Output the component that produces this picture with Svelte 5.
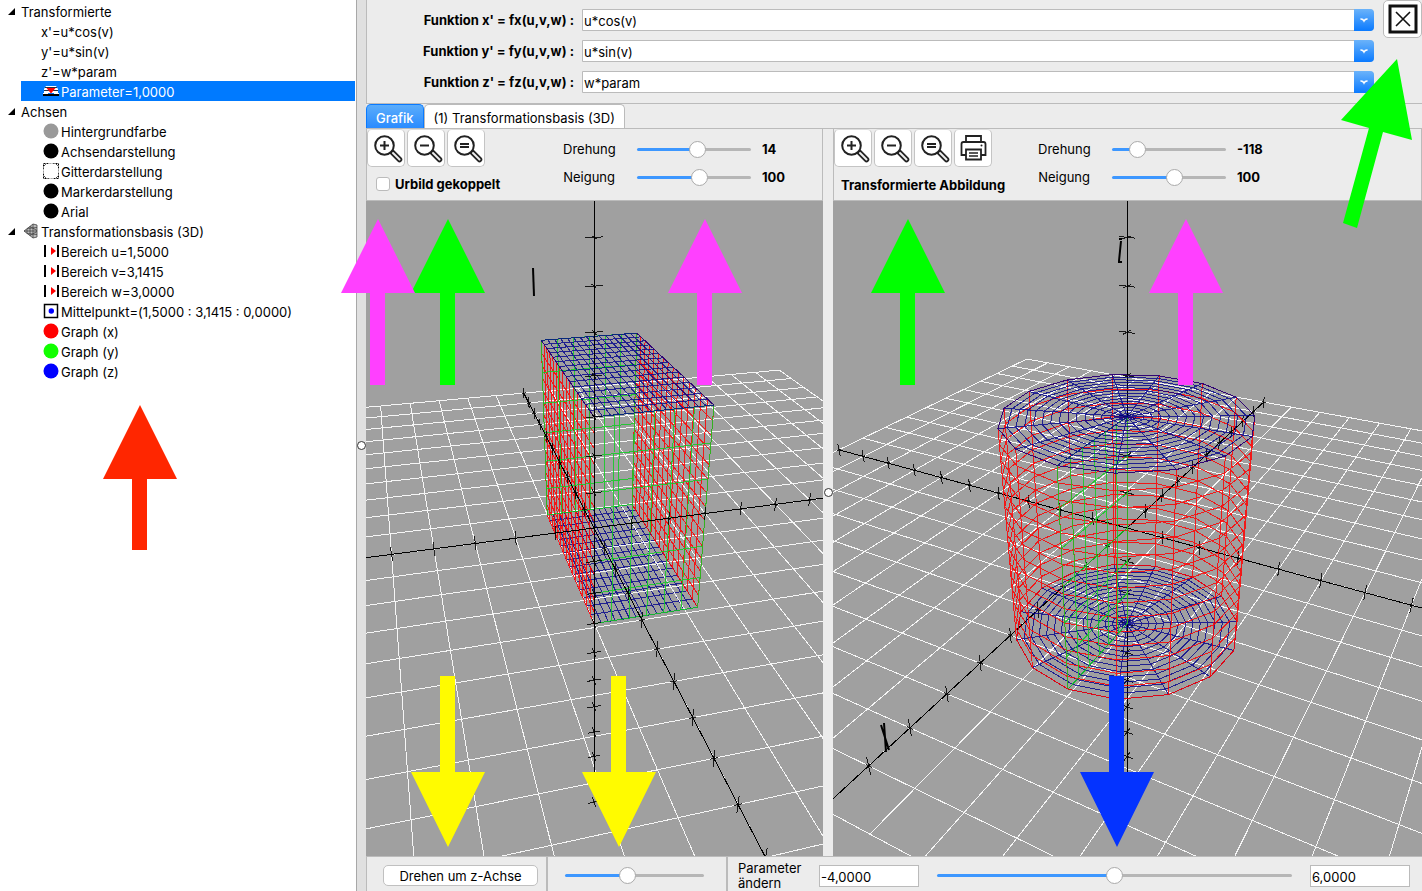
<script lang="ts">
  type Vec = [number, number, number];
  type Item = { text: string; icon?: string; color?: string; selected?: boolean };
  type Group = { text: string; icon?: string; items: Item[] };

  const tree: Group[] = [
    {
      text: 'Transformierte',
      items: [
        { text: "x'=u*cos(v)" },
        { text: "y'=u*sin(v)" },
        { text: "z'=w*param" },
        { text: 'Parameter=1,0000', icon: 'param', selected: true },
      ],
    },
    {
      text: 'Achsen',
      items: [
        { text: 'Hintergrundfarbe', icon: 'dot', color: '#999' },
        { text: 'Achsendarstellung', icon: 'dot', color: '#000' },
        { text: 'Gitterdarstellung', icon: 'grid' },
        { text: 'Markerdarstellung', icon: 'dot', color: '#000' },
        { text: 'Arial', icon: 'dot', color: '#000' },
      ],
    },
    {
      text: 'Transformationsbasis (3D)',
      icon: 'mesh',
      items: [
        { text: 'Bereich u=1,5000', icon: 'range' },
        { text: 'Bereich v=3,1415', icon: 'range' },
        { text: 'Bereich w=3,0000', icon: 'range' },
        { text: 'Mittelpunkt=(1,5000 : 3,1415 : 0,0000)', icon: 'center' },
        { text: 'Graph (x)', icon: 'dot', color: '#f00' },
        { text: 'Graph (y)', icon: 'dot', color: '#1f0' },
        { text: 'Graph (z)', icon: 'dot', color: '#00f' },
      ],
    },
  ];

  const functions = [
    { id: 'fx', label: "Funktion x' = fx(u,v,w) :", value: 'u*cos(v)' },
    { id: 'fy', label: "Funktion y' = fy(u,v,w) :", value: 'u*sin(v)' },
    { id: 'fz', label: "Funktion z' = fz(u,v,w) :", value: 'w*param' },
  ];

  let coupled = $state(false);
  let spin = $state(44);
  let param = $state(1);
  let left = $state({ turn: 14, tilt: 100 });
  let right = $state({ turn: -118, tilt: 100 });

  const STEPS = 15;
  const TAU = Math.PI * 2;

  // camera: 30 degrees above the plane, 20 units away
  function camera(deg: number, cx: number, cy: number) {
    const a = (deg * Math.PI) / 180;
    return ([x, y, z]: Vec) => {
      const X = x * Math.cos(a) - y * Math.sin(a);
      const Y = x * Math.sin(a) + y * Math.cos(a);
      const w = 1 + (Y * 0.866 - z * 0.5) / 20;
      const sx = cx + (39.56 * X) / w;
      const sy = cy - (39.56 * (z * 0.866 + Y * 0.5)) / w;
      return `${sx.toFixed(1)} ${sy.toFixed(1)}`;
    };
  }

  function build(deg: number, cx: number, map: (u: number, v: number, w: number) => Vec) {
    const p = camera(deg, cx, 327);
    const line = (...pts: Vec[]) => 'M' + pts.map(p).join('L');

    // n x m lines over a face, a and b running from 0 to 1
    function face(n: number, m: number, at: (a: number, b: number) => Vec) {
      let d = '';
      for (let i = 0; i <= n; i++) {
        d += line(...Array.from({ length: m + 1 }, (_, j) => at(i / n, j / m)));
      }
      for (let j = 0; j <= m; j++) {
        d += line(...Array.from({ length: n + 1 }, (_, i) => at(i / n, j / m)));
      }
      return d;
    }

    const cap = (w: number) => face(STEPS, STEPS, (a, b) => map(a * 3, b * TAU, w));

    const axes = line([-10, 0, 0], [10, 0, 0]) + line([0, -10, 0], [0, 10, 0]) + line([0, 0, -9], [0, 0, 10]);
    let ticks = '';
    const t = 0.2;
    for (let i = -10; i <= 10; i++) {
      if (i === 0) continue;
      ticks += line([i, 0, -t], [i, 0, t]) + line([i, -t / 3, 0], [i, t / 3, 0]);
      ticks += line([0, i, -t], [0, i, t]) + line([-t / 3, i, 0], [t / 3, i, 0]);
      ticks += line([-t, 0, i], [t, 0, i]) + line([0, -t, i], [0, t, i]);
    }

    return {
      floor: face(20, 20, (a, b) => [a * 20 - 10, b * 20 - 10, 0]),
      axes,
      ticks,
      green: [0, TAU].map(v => face(6, 6, (a, b) => map(a * 3, v, b * 6 - 3))).join(''),
      red: [0, 3].map(u => face(STEPS, STEPS, (a, b) => map(u, a * TAU, b * 6 - 3))).join(''),
      bottom: cap(-3),
      top: cap(3),
    };
  }

  const box = build(14.6, 228, (u, v, w) => [u, v, w]);
  const cylinder = build(-118.5, 294, (u, v, w) => [u * Math.cos(v), u * Math.sin(v), w]);

  const up = (x: number, y: number, len: number) =>
    `${x},${y} ${x + 37},${y + 74} ${x + 7},${y + 74} ${x + 7},${y + len} ${x - 8},${y + len} ${x - 8},${y + 74} ${x - 37},${y + 74}`;
  const down = (x: number, y: number, len: number) =>
    `${x},${y} ${x + 37},${y - 75} ${x + 7},${y - 75} ${x + 7},${y - len} ${x - 8},${y - len} ${x - 8},${y - 75} ${x - 37},${y - 75}`;

  const arrows = [
    { color: '#00ff00', points: up(448, 219, 166) },
    { color: '#ff40ff', points: up(378, 219, 166) },
    { color: '#ff40ff', points: up(705, 219, 166) },
    { color: '#00ff00', points: up(908, 219, 166) },
    { color: '#ff40ff', points: up(1186, 219, 166) },
    { color: '#ff2600', points: up(140, 405, 145) },
    { color: '#fffb00', points: down(448, 847, 171) },
    { color: '#fffb00', points: down(619, 847, 171) },
    { color: '#0433ff', points: down(1117, 847, 171) },
    { color: '#00ff00', points: '1397,59 1412,140 1383,132 1357,228 1343,223 1369,128 1341,120' },
  ];

  const pct = (v: number, min: number, max: number) => (v - min) / (max - min);
</script>

{#snippet treeIcon(name: string, color?: string)}
  <svg class="tree-icon" width="16" height="16" viewBox="0 0 16 16" aria-hidden="true">
    {#if name === 'dot'}
      <circle cx="8" cy="8" r="7.500" fill={color} />
    {:else if name === 'grid'}
      <rect width="16" height="16" fill="#fff" />
      <rect x=".5" y=".5" width="15" height="15" fill="none" stroke="#000" stroke-dasharray="2 1" />
      <path d="M1 3l2-2M13 1l2 2M1 13l2 2M13 15l2-2" stroke="#000" stroke-dasharray="1 1" />
      <circle cx="8" cy="8" r="7.700" fill="#fff" />
    {:else if name === 'param'}
      <path d="M3 3h10l2 3v4H1V6z" fill="#fff" />
      <path d="M2 4.500h12M1 7.500h14" stroke="#234" stroke-width="1" />
      <path d="M3.500 5h9L8 10.500z" fill="#f00" />
      <path d="M0 10.500h5M11 10.500h5" stroke="#fff" />
      <path d="M0 12h16" stroke="#000" stroke-width="2" />
    {:else if name === 'range'}
      <path d="M2 2v12M15 2v12" stroke="#000" stroke-width="2" />
      <path d="M8 4l5 4-5 4z" fill="#f00" />
    {:else if name === 'center'}
      <rect x="1.500" y="1.500" width="13" height="13" fill="#fff" stroke="#000" stroke-width="1.500" />
      <circle cx="8.300" cy="8" r="2.700" fill="#00f" />
    {:else}
      <path d="M1 8L10 1l4 1v12l-4 1zM10 1v14M7 3.500v9M4 6v4.500M1 8h13M4 5.500l10-1M4 10.500l10 1M7 3.500l7 4M7 12.500l7-4" fill="#bbb" stroke="#444" stroke-width=".8" />
    {/if}
  </svg>
{/snippet}

{#snippet toolButton(kind: string, label: string)}
  <button class="tool" aria-label={label} title={label}>
    <svg width="38" height="38" viewBox="0 0 38 38" fill="none" stroke="#222">
      {#if kind === 'print'}
        <path d="M12 13V7h15v6" stroke-width="1.800" />
        <path d="M12 26H7.500v-11q0-2 2-2h20q2 0 2 2v11H27" stroke-width="1.800" />
        <path d="M12 20.500h15v10H12z" stroke-width="1.800" />
        <path d="M15 24h9M15 27h9" stroke-width="1.500" />
        <circle cx="27.500" cy="16.500" r="1" fill="#222" stroke="none" />
      {:else}
        <path d="M25 23l7.500 7.500" stroke-width="5.500" stroke-linecap="round" />
        <path d="M26 24l6.500 6.500" stroke="#eee" stroke-width="2" stroke-linecap="round" />
        <circle cx="17.500" cy="16.500" r="9.300" fill="#fff" stroke-width="2" />
        {#if kind === 'in'}
          <path d="M13 16.500h9M17.500 12v9" stroke-width="2" />
        {:else if kind === 'out'}
          <path d="M13 16.500h9" stroke-width="2" />
        {:else}
          <path d="M13 15h9M13 18h9" stroke-width="2" />
        {/if}
      {/if}
    </svg>
  </button>
{/snippet}

{#snippet angles(view: { turn: number; tilt: number }, id: string)}
  <div class="angles">
    <label for="{id}-turn">Drehung</label>
    <input id="{id}-turn" type="range" min="-180" max="180" bind:value={view.turn} style="--p:{pct(view.turn, -180, 180)}" />
    <output for="{id}-turn">{view.turn}</output>
    <label for="{id}-tilt">Neigung</label>
    <input id="{id}-tilt" type="range" min="0" max="180" bind:value={view.tilt} style="--p:{pct(view.tilt, 0, 180)}" />
    <output for="{id}-tilt">{view.tilt}</output>
  </div>
{/snippet}

<div class="app">
  <nav class="sidebar">
    <ul class="tree">
      {#each tree as group}
        <li>
          <div class="row">
            <svg class="twisty" width="8" height="8" viewBox="0 0 8 8" aria-hidden="true"><path d="M7 0v7H0z" /></svg>
            {#if group.icon}{@render treeIcon(group.icon)}{/if}
            <span>{group.text}</span>
          </div>
          <ul>
            {#each group.items as item}
              <li class="row child" class:selected={item.selected}>
                {#if item.icon}{@render treeIcon(item.icon, item.color)}{/if}
                <span>{item.text}</span>
              </li>
            {/each}
          </ul>
        </li>
      {/each}
    </ul>
  </nav>

  <div class="splitter main-split"><i></i></div>

  <main class="main">
    <header class="functions">
      <div class="fields">
        {#each functions as f}
          <label for={f.id}>{f.label}</label>
          <div class="combo">
            <select id={f.id}><option>{f.value}</option></select>
            <svg width="20" height="22" viewBox="0 0 20 22" aria-hidden="true">
              <path d="M7 10q2 0 3 2 1-2 3-2" fill="none" stroke="#fff" stroke-width="1.600" stroke-linecap="round" />
            </svg>
          </div>
        {/each}
      </div>
      <button class="close" aria-label="Schließen">
        <svg width="30" height="30" viewBox="0 0 30 30" fill="none" stroke="#111">
          <rect x="2" y="2" width="26" height="26" stroke-width="3" />
          <path d="M8 8l14 14M22 8L8 22" stroke-width="1.600" />
        </svg>
      </button>
    </header>

    <div class="tabs">
      <button class="tab active">Grafik</button>
      <button class="tab">(1) Transformationsbasis (3D)</button>
    </div>

    <div class="panes">
      <section class="pane source">
        <div class="toolbar">
          <div class="tools">
            <div class="buttons">
              {@render toolButton('in', 'Vergrößern')}
              {@render toolButton('out', 'Verkleinern')}
              {@render toolButton('fit', 'Originalgröße')}
            </div>
            <label class="check"><input type="checkbox" bind:checked={coupled} />Urbild gekoppelt</label>
          </div>
          {@render angles(left, 'src')}
        </div>
        <svg class="stage" viewBox="0 0 457 655" preserveAspectRatio="xMidYMid slice">
          <path class="blue" d={box.bottom} />
          <path class="floor" d={box.floor} />
          <path class="red" d={box.red} />
          <path class="green" d={box.green} />
          <path class="blue" d={box.top} />
          <path class="axis" d={box.axes} />
          <path class="tick" d={box.ticks} />
          <path class="letter" d="M167 67l1 28" />
        </svg>
      </section>

      <div class="splitter pane-split"><i></i></div>

      <section class="pane target">
        <div class="toolbar">
          <div class="tools">
            <div class="buttons">
              {@render toolButton('in', 'Vergrößern')}
              {@render toolButton('out', 'Verkleinern')}
              {@render toolButton('fit', 'Originalgröße')}
              {@render toolButton('print', 'Drucken')}
            </div>
            <strong class="caption">Transformierte Abbildung</strong>
          </div>
          {@render angles(right, 'dst')}
        </div>
        <svg class="stage" viewBox="0 0 589 655" preserveAspectRatio="xMidYMid slice">
          <path class="floor" d={cylinder.floor} />
          <path class="axis" d={cylinder.axes} />
          <path class="tick" d={cylinder.ticks} />
          <path class="blue" d={cylinder.bottom} />
          <path class="red" d={cylinder.red} />
          <path class="green" d={cylinder.green} />
          <path class="blue" d={cylinder.top} />
          <path class="letter" d="M286 38h3M288 40l-2 20M285 61h4" />
          <path class="letter" d="M48 524l8 25M51 522l2 29" />
        </svg>
      </section>
    </div>

    <footer class="bottom">
      <div class="cell spin"><button class="push">Drehen um z-Achse</button></div>
      <div class="cell speed">
        <input type="range" min="0" max="100" aria-label="Geschwindigkeit" bind:value={spin} style="--p:{pct(spin, 0, 100)}" />
      </div>
      <div class="cell param">
        <label for="param">Parameter ändern</label>
        <input class="num" type="text" value="-4,0000" aria-label="Minimum" />
        <input id="param" type="range" min="-4" max="6" step="0.1" bind:value={param} style="--p:{pct(param, -4, 6)}" />
        <input class="num" type="text" value="6,0000" aria-label="Maximum" />
      </div>
    </footer>
  </main>

  <svg class="arrows" aria-hidden="true">
    {#each arrows as a}
      <polygon points={a.points} fill={a.color} />
    {/each}
  </svg>
</div>

<style>
  :global(body) {
    margin: 0;
    overflow: hidden;
  }

  .app {
    position: relative;
    display: flex;
    height: 100vh;
    overflow: hidden;
    background: #ececec;
    color: #000;
    font: 13px/16px Inter, "Liberation Sans", sans-serif;
  }
  .app button,
  .app input,
  .app select { font: inherit; color: inherit; box-sizing: border-box; }

  /* Tree */
  .sidebar {
    flex: 0 0 356px;
    background: #fff;
  }
  .tree,
  .tree ul { list-style: none; margin: 0; padding: 0; }
  .tree { padding: 1px 1px 0 0; }
  .row {
    display: flex;
    align-items: center;
    height: 20px;
    padding-left: 8px;
    white-space: nowrap;
  }
  .row span { padding-top: 2px; }
  .twisty { margin: 2px 5px 0 0; }
  .child { margin-left: 21px; padding-left: 20px; }
  .tree-icon { margin: 0 2px; }
  .selected { background: #007aff; color: #fff; }

  /* Splitters */
  .splitter {
    display: flex;
    align-items: center;
    justify-content: center;
    box-sizing: border-box;
    flex: 0 0 10px;
  }
  .splitter i {
    width: 7px;
    height: 7px;
    flex-shrink: 0;
    border: 1px solid #333;
    border-radius: 50%;
    background: #fff;
  }
  .main-split { background: #e0e0e0; border-left: 1px solid #a8a8a8; }
  .pane-split { background: #ececec; }

  .main {
    display: flex;
    flex-direction: column;
    flex: 1;
    min-width: 0;
  }

  /* Functions */
  .functions {
    display: flex;
    align-items: flex-start;
    gap: 9px;
    height: 103px;
    border-left: 1px solid #bbb;
    border-bottom: 1px solid #bbb;
  }
  .fields {
    display: grid;
    grid-template-columns: 207px 1fr;
    gap: 9px 8px;
    align-items: center;
    flex: 1;
    padding-top: 9px;
  }
  .fields label { font-weight: 700; text-align: right; white-space: nowrap; }
  .combo { position: relative; height: 22px; }
  .combo select {
    appearance: none;
    display: block;
    width: 100%;
    height: 22px;
    padding: 2px 22px 0 1px;
    border: 1px solid #bbb;
    border-radius: 0 4px 4px 0;
    background: #fff;
  }
  .combo svg {
    position: absolute;
    top: 0;
    right: 0;
    border-radius: 0 4px 4px 0;
    background: linear-gradient(#6bb3fa, #0a7aff);
    pointer-events: none;
  }
  .close {
    display: flex;
    align-items: center;
    justify-content: center;
    width: 39px;
    height: 38px;
    padding: 0;
    border: 1px solid #bbb;
    border-radius: 5px;
    background: #fff;
  }

  /* Tabs */
  .tabs {
    display: flex;
    height: 24px;
    border-bottom: 1px solid #bbb;
  }
  .tab {
    padding: 2px 9px 0;
    border: 1px solid #bbb;
    border-bottom: 0;
    border-radius: 5px 5px 0 0;
    background: #fff;
    white-space: nowrap;
  }
  .tab.active {
    border-color: #0a7aff;
    background: linear-gradient(#5badfb, #2a8bff);
    color: #fff;
    font-weight: 500;
  }

  /* Panes */
  .panes {
    display: flex;
    flex: 1;
    min-height: 0;
  }
  .pane {
    display: flex;
    flex-direction: column;
    min-width: 0;
  }
  .source { flex: 457 1 0; }
  .target { flex: 589 1 0; }
  .toolbar {
    display: flex;
    flex: 0 0 72px;
    box-sizing: border-box;
    border: 1px solid #bbb;
    border-top: 0;
  }
  .tools { flex: 0 0 196px; }
  .target .tools { flex-basis: 204px; }
  .buttons { display: flex; gap: 2px; }
  .tool {
    width: 38px;
    height: 38px;
    padding: 0;
    border: 1px solid #c4c4c4;
    border-top-color: #ddd;
    border-radius: 5px;
    background: #fff;
  }
  .tool svg { display: block; margin: -1px; }
  .check {
    display: flex;
    align-items: center;
    gap: 5px;
    margin: 9px 0 0 9px;
    font-weight: 700;
    white-space: nowrap;
  }
  .check input {
    appearance: none;
    width: 14px;
    height: 14px;
    margin: 0;
    border: 1px solid #bbb;
    border-radius: 3px;
    background: #fff;
  }
  .caption { display: block; margin: 10px 0 0 7px; white-space: nowrap; }
  .angles {
    display: grid;
    grid-template-columns: 52px 114px auto;
    grid-auto-rows: 28px;
    column-gap: 22px;
    align-items: center;
    align-content: start;
    padding-top: 6px;
  }
  .angles label { text-align: right; }
  .angles output { margin-left: -11px; font-weight: 700; }

  .stage {
    display: block;
    flex: 1;
    width: 100%;
    min-height: 0;
    background: #a0a0a0;
  }
  .stage path { fill: none; stroke-width: 1; shape-rendering: crispEdges; }
  .stage .floor { stroke: #fff; stroke-opacity: 0.9; }
  .stage .green { stroke: #1c2; stroke-opacity: 0.85; }
  .stage .red { stroke: #f00; stroke-opacity: 0.85; }
  .stage .blue { stroke: #00008c; stroke-opacity: 0.8; }
  .stage .axis { stroke: #000; }
  .stage .tick { stroke: #000; stroke-opacity: 0.85; }
  .stage .letter { stroke: #000; stroke-width: 2; shape-rendering: auto; }

  /* Sliders */
  input[type='range'] {
    appearance: none;
    width: 114px;
    height: 18px;
    margin: 0;
    background: transparent;
  }
  input[type='range']::-webkit-slider-runnable-track {
    height: 3px;
    border-radius: 2px;
    background: linear-gradient(to right, #3d97ff calc(9px + (100% - 18px) * var(--p)), #b6b6b6 0);
  }
  input[type='range']::-webkit-slider-thumb {
    appearance: none;
    box-sizing: border-box;
    width: 17px;
    height: 17px;
    margin-top: -7px;
    border: 1px solid #aaa;
    border-radius: 50%;
    background: #fff;
  }

  /* Bottom bar */
  .bottom {
    display: flex;
    flex: 0 0 35px;
    box-sizing: border-box;
    border-top: 1px solid #bbb;
  }
  .cell {
    display: flex;
    align-items: center;
    box-sizing: border-box;
    padding-top: 3px;
  }
  .spin { flex: 0 0 180px; padding-left: 16px; border-left: 1px solid #bbb; }
  .push {
    width: 155px;
    height: 21px;
    padding: 0;
    border: 1px solid #c0c0c0;
    border-radius: 5px;
    background: #fff;
  }
  .speed { flex: 0 0 180px; padding-left: 17px; border-left: 2px solid #bbb; }
  .speed input { width: 139px; }
  .param { flex: 1; padding-left: 10px; padding-right: 12px; border-left: 2px solid #bbb; min-width: 0; }
  .param label { flex: 0 0 81px; align-self: flex-end; line-height: 15px; }
  .param input[type='range'] { flex: 1; min-width: 0; margin: 0 18px; }
  .num {
    width: 100px;
    height: 22px;
    padding: 2px 1px 0;
    border: 1px solid #bbb;
    background: #fff;
  }

  /* Marker arrows over the window */
  .arrows {
    position: absolute;
    inset: 0;
    width: 100%;
    height: 100%;
    pointer-events: none;
  }
</style>
